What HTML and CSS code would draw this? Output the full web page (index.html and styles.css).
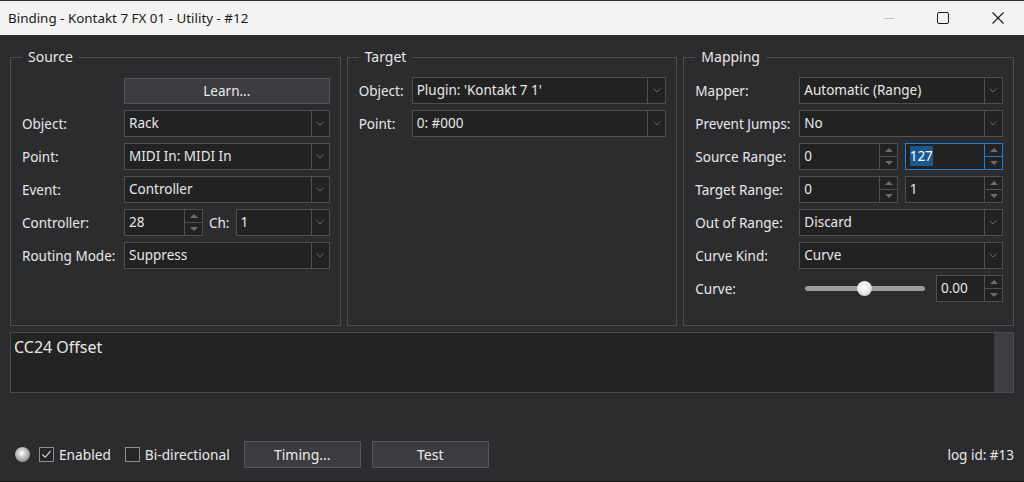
FILE: index.html
```html
<!DOCTYPE html>
<html lang="en">
<head>
  <meta charset="UTF-8">
  <meta name="viewport" content="width=device-width, initial-scale=1.0">
  <title>Binding - Kontakt 7 FX 01 - Utility - #12</title>
  <link rel="stylesheet" href="styles.css">
</head>
<body>
  <div class="window">
    <!-- title bar -->
    <div class="titlebar">
      <span class="title">Binding - Kontakt 7 FX 01 - Utility - #12</span>
      <div class="caption">
        <span class="cap-min"></span>
        <svg class="cap-max" width="12" height="12" viewBox="0 0 12 12"><rect x="0.5" y="0.5" width="11" height="11" rx="1.5" fill="none" stroke="#1a1a1a" stroke-width="1"/></svg>
        <svg class="cap-close" width="12" height="12" viewBox="0 0 12 12"><path d="M0.5 0.5 L11.5 11.5 M11.5 0.5 L0.5 11.5" stroke="#1a1a1a" stroke-width="1.1"/></svg>
      </div>
    </div>

    <div class="client">
      <div class="groups">
        <!-- Source -->
        <fieldset class="group source">
          <legend>Source</legend>
          <div class="form">
            <span></span>
            <button class="btn">Learn...</button>

            <label>Object:</label>
            <div class="combo"><span class="value">Rack</span><span class="arrow"><svg width="8" height="5" viewBox="0 0 8 5"><path d="M0.5 0.5 L4 4 L7.5 0.5" fill="none" stroke="#686868"/></svg></span></div>

            <label>Point:</label>
            <div class="combo"><span class="value">MIDI In: MIDI In</span><span class="arrow"><svg width="8" height="5" viewBox="0 0 8 5"><path d="M0.5 0.5 L4 4 L7.5 0.5" fill="none" stroke="#686868"/></svg></span></div>

            <label>Event:</label>
            <div class="combo"><span class="value">Controller</span><span class="arrow"><svg width="8" height="5" viewBox="0 0 8 5"><path d="M0.5 0.5 L4 4 L7.5 0.5" fill="none" stroke="#686868"/></svg></span></div>

            <label>Controller:</label>
            <div class="pair">
              <div class="spin ctl-spin">
                <span class="value">28</span>
                <span class="btns"><span class="up"></span><span class="down"></span></span>
              </div>
              <label class="ch">Ch:</label>
              <div class="combo"><span class="value">1</span><span class="arrow"><svg width="8" height="5" viewBox="0 0 8 5"><path d="M0.5 0.5 L4 4 L7.5 0.5" fill="none" stroke="#686868"/></svg></span></div>
            </div>

            <label>Routing Mode:</label>
            <div class="combo"><span class="value">Suppress</span><span class="arrow"><svg width="8" height="5" viewBox="0 0 8 5"><path d="M0.5 0.5 L4 4 L7.5 0.5" fill="none" stroke="#686868"/></svg></span></div>
          </div>
        </fieldset>

        <!-- Target -->
        <fieldset class="group target">
          <legend>Target</legend>
          <div class="form">
            <label>Object:</label>
            <div class="combo"><span class="value">Plugin: 'Kontakt 7 1'</span><span class="arrow"><svg width="8" height="5" viewBox="0 0 8 5"><path d="M0.5 0.5 L4 4 L7.5 0.5" fill="none" stroke="#686868"/></svg></span></div>

            <label>Point:</label>
            <div class="combo"><span class="value">0: #000</span><span class="arrow"><svg width="8" height="5" viewBox="0 0 8 5"><path d="M0.5 0.5 L4 4 L7.5 0.5" fill="none" stroke="#686868"/></svg></span></div>
          </div>
        </fieldset>

        <!-- Mapping -->
        <fieldset class="group mapping">
          <legend>Mapping</legend>
          <div class="form">
            <label>Mapper:</label>
            <div class="combo"><span class="value">Automatic (Range)</span><span class="arrow"><svg width="8" height="5" viewBox="0 0 8 5"><path d="M0.5 0.5 L4 4 L7.5 0.5" fill="none" stroke="#686868"/></svg></span></div>

            <label>Prevent Jumps:</label>
            <div class="combo"><span class="value">No</span><span class="arrow"><svg width="8" height="5" viewBox="0 0 8 5"><path d="M0.5 0.5 L4 4 L7.5 0.5" fill="none" stroke="#686868"/></svg></span></div>

            <label>Source Range:</label>
            <div class="range">
              <div class="spin"><span class="value">0</span><span class="btns"><span class="up"></span><span class="down"></span></span></div>
              <div class="spin focused"><span class="value"><span class="sel">127</span></span><span class="btns"><span class="up"></span><span class="down"></span></span></div>
            </div>

            <label>Target Range:</label>
            <div class="range">
              <div class="spin"><span class="value">0</span><span class="btns"><span class="up"></span><span class="down"></span></span></div>
              <div class="spin"><span class="value">1</span><span class="btns"><span class="up"></span><span class="down"></span></span></div>
            </div>

            <label>Out of Range:</label>
            <div class="combo"><span class="value">Discard</span><span class="arrow"><svg width="8" height="5" viewBox="0 0 8 5"><path d="M0.5 0.5 L4 4 L7.5 0.5" fill="none" stroke="#686868"/></svg></span></div>

            <label>Curve Kind:</label>
            <div class="combo"><span class="value">Curve</span><span class="arrow"><svg width="8" height="5" viewBox="0 0 8 5"><path d="M0.5 0.5 L4 4 L7.5 0.5" fill="none" stroke="#686868"/></svg></span></div>

            <label>Curve:</label>
            <div class="curve">
              <div class="slider"><span class="track"></span><span class="thumb"></span></div>
              <div class="spin curve-spin"><span class="value">0.00</span><span class="btns"><span class="up"></span><span class="down"></span></span></div>
            </div>
          </div>
        </fieldset>
      </div>

      <!-- description -->
      <div class="notes">
        <div class="notes-text">CC24 Offset</div>
        <div class="scrollbar"></div>
      </div>

      <!-- bottom row -->
      <div class="footer">
        <span class="led"></span>
        <span class="check checked"><svg width="13" height="13" viewBox="0 0 13 13"><path d="M2.5 6.5 L5.2 9.3 L10.5 3.2" fill="none" stroke="#e8e8e8" stroke-width="1.1"/></svg></span>
        <span class="check-label">Enabled</span>
        <span class="check"></span>
        <span class="check-label">Bi-directional</span>
        <button class="btn footer-btn timing">Timing...</button>
        <button class="btn footer-btn">Test</button>
        <span class="log-id">log id: #13</span>
      </div>
    </div>
  </div>
</body>
</html>
```

FILE: styles.css
```css
/* base */
body {
  margin: 0;
  width: 1024px;
  height: 482px;
  overflow: hidden;
  font-family: "Noto Sans", "DejaVu Sans", sans-serif;
  font-size: 13.5px;
  color: #e8e8e8;
  background: #2c2c2f;
}

.window {
  display: flex;
  flex-direction: column;
  height: 482px;
  box-sizing: border-box;
  border-bottom: 1px solid #151515;
}

/* title bar */
.titlebar {
  height: 35px;
  box-sizing: border-box;
  border-top: 1px solid #2e2e2e;
  background: #f3f3f3;
  color: #1a1a1a;
  display: flex;
  align-items: center;
  padding-left: 8px;
}

.title {
  font-size: 13.4px;
  padding-bottom: 1px;
}

.caption {
  margin-left: auto;
  display: flex;
  align-items: center;
  margin-right: 20px;
}

.cap-min {
  width: 10px;
  height: 1px;
  background: #c4c4c4;
  margin-right: 43px;
}

.cap-max {
  margin-right: 43px;
}

/* client area */
.client {
  flex: 1;
  display: flex;
  flex-direction: column;
  padding: 12px 10px 13px 10px;
}

.groups {
  display: grid;
  grid-template-columns: 1fr 1fr 1fr;
  column-gap: 6px;
  height: 279px;
}

.group {
  margin: 0;
  min-width: 0;
  border: 1px solid #4e4e52;
  padding: 10px 10px 0 11px;
}

.group legend {
  padding: 0 6px;
  font-size: 14px;
  line-height: 20px;
}

.form {
  display: grid;
  grid-template-columns: 102px 1fr;
  grid-auto-rows: 27px;
  row-gap: 6px;
  align-items: center;
}

.target .form {
  grid-template-columns: 53px 1fr;
}

.mapping .form {
  grid-template-columns: 104px 1fr;
}

label {
  white-space: nowrap;
}

/* buttons */
.btn {
  font: inherit;
  color: #ececec;
  background: #3c3c40;
  border: 1px solid #56565a;
  height: 27px;
  padding: 0;
  cursor: pointer;
}

.source .btn {
  height: 26px;
}

/* combo box */
.combo {
  display: flex;
  height: 27px;
  box-sizing: border-box;
  border: 1px solid #505053;
  background: #222223;
  min-width: 0;
}

.combo .value,
.spin .value {
  flex: 1;
  padding-left: 4px;
  line-height: 25px;
  white-space: nowrap;
  overflow: hidden;
}

.combo .arrow {
  width: 17px;
  border-left: 1px solid #505053;
  display: flex;
  align-items: center;
  justify-content: center;
}

/* spin box */
.spin {
  display: flex;
  height: 27px;
  box-sizing: border-box;
  border: 1px solid #505053;
  background: #222223;
  min-width: 0;
}

.spin .btns {
  width: 17px;
  border-left: 1px solid #505053;
  display: flex;
  flex-direction: column;
}

.spin .up,
.spin .down {
  flex: 1;
  position: relative;
}

.spin .up {
  border-bottom: 1px solid #505053;
}

.spin .up::after,
.spin .down::after {
  content: "";
  position: absolute;
  left: 5px;
  top: 4px;
  border-left: 4px solid transparent;
  border-right: 4px solid transparent;
}

.spin .up::after {
  border-bottom: 4px solid #6c6c6e;
}

.spin .down::after {
  top: 4px;
  border-top: 4px solid #6c6c6e;
}

.spin.focused,
.spin.focused .btns,
.spin.focused .up {
  border-color: #1d80d8;
}

.sel {
  background: #1b5791;
  color: #fff;
  padding: 1px 0;
}

/* controller + channel */
.pair {
  display: flex;
  align-items: center;
}

.ctl-spin {
  width: 79px;
  flex: none;
}

.pair .ch {
  margin: 0 6px 0 6px;
}

.pair .combo {
  flex: 1;
}

.range {
  display: grid;
  grid-template-columns: 1fr 1fr;
  column-gap: 7px;
}

/* curve slider */
.curve {
  display: flex;
  align-items: center;
}

.slider {
  flex: 1;
  position: relative;
  height: 27px;
  margin: 0 11px 0 6px;
}

.slider .track {
  position: absolute;
  left: 0;
  right: 0;
  top: 11px;
  height: 5px;
  border-radius: 3px;
  background: #9c9c9e;
}

.slider .thumb {
  position: absolute;
  left: 50%;
  top: 6px;
  width: 15px;
  height: 15px;
  margin-left: -8px;
  border-radius: 50%;
  background: radial-gradient(circle at 45% 40%, #ffffff 0, #e6e6e6 50%, #bdbdbd 100%);
}

.curve-spin {
  width: 67px;
  flex: none;
}

/* notes */
.notes {
  margin-top: 6px;
  height: 61px;
  box-sizing: border-box;
  border: 1px solid #4c4c50;
  background: #232324;
  display: flex;
}

.notes-text {
  flex: 1;
  font-size: 16px;
  line-height: 22px;
  padding: 3px 3px;
}

.scrollbar {
  width: 19px;
  background: #3e3e42;
}

/* footer */
.footer {
  margin-top: auto;
  display: flex;
  align-items: center;
  height: 27px;
}

.led {
  width: 15px;
  height: 15px;
  margin-left: 5px;
  margin-right: 9px;
  border-radius: 50%;
  background: radial-gradient(circle at 45% 40%, #ffffff 0, #d0d0d0 30%, #8a8a8a 75%, #5c5c5c 100%);
}

.check {
  width: 15px;
  height: 15px;
  box-sizing: border-box;
  border: 1px solid #8e8e90;
  background: #262627;
  display: flex;
  align-items: center;
  justify-content: center;
}

.check-label {
  margin-left: 5px;
  margin-right: 14px;
  font-size: 13.7px;
}

.footer-btn {
  width: 117px;
  height: 27px;
  font-size: 14px;
}

.timing {
  margin-right: 11px;
}

.log-id {
  margin-left: auto;
  margin-right: 0;
}
```
